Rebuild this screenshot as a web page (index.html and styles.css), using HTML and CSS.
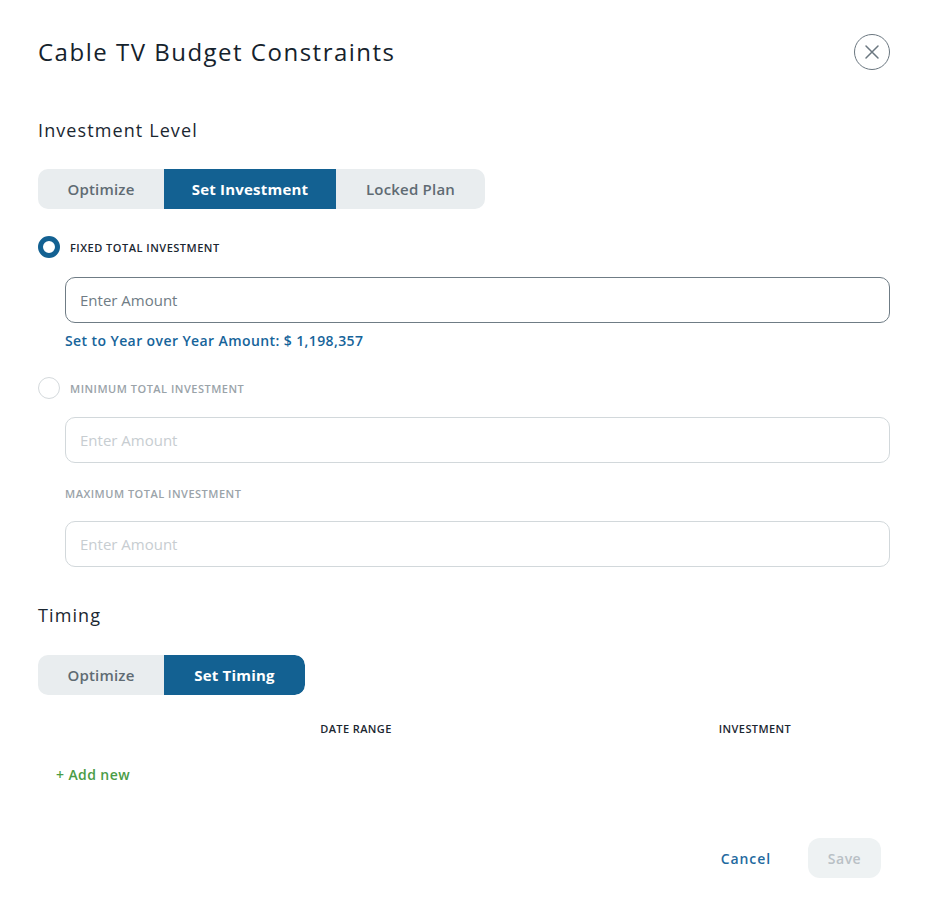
FILE: index.html
```html
<!DOCTYPE html>
<html lang="en">
<head>
<meta charset="utf-8">
<title>Cable TV Budget Constraints</title>
<link rel="stylesheet" href="styles.css">
</head>
<body>
<div class="modal">
  <header class="header">
    <h1 class="title">Cable TV Budget Constraints</h1>
    <button class="close" aria-label="Close">
      <svg width="16" height="16" viewBox="0 0 16 16"><path d="M2 2 L14 14 M14 2 L2 14" stroke="#6b7780" stroke-width="1.5" stroke-linecap="round" fill="none"/></svg>
    </button>
  </header>

  <h2 class="section-title first">Investment Level</h2>
  <div class="seg seg-inv">
    <div class="seg-item w1">Optimize</div>
    <div class="seg-item w2 active">Set Investment</div>
    <div class="seg-item w3 last">Locked Plan</div>
  </div>

  <div class="radio-row r1">
    <span class="radio checked"></span>
    <span class="radio-label">FIXED TOTAL INVESTMENT</span>
  </div>
  <div class="field f1"><span class="placeholder">Enter Amount</span></div>
  <div class="helper">Set to Year over Year Amount: $ 1,198,357</div>

  <div class="radio-row r2">
    <span class="radio"></span>
    <span class="radio-label muted">MINIMUM TOTAL INVESTMENT</span>
  </div>
  <div class="field f2 disabled"><span class="placeholder">Enter Amount</span></div>
  <div class="sub-label">MAXIMUM TOTAL INVESTMENT</div>
  <div class="field f3 disabled"><span class="placeholder">Enter Amount</span></div>

  <h2 class="section-title timing">Timing</h2>
  <div class="seg seg-time">
    <div class="seg-item w1">Optimize</div>
    <div class="seg-item w4 active end">Set Timing</div>
  </div>

  <div class="table-head">
    <div class="th">DATE RANGE</div>
    <div class="th">INVESTMENT</div>
    <div></div>
  </div>
  <div class="add-new">+ Add new</div>

  <footer class="footer">
    <button class="cancel">Cancel</button>
    <button class="save">Save</button>
  </footer>
</div>
</body>
</html>
```

FILE: styles.css
```css
* { box-sizing: border-box; }
html, body { margin: 0; padding: 0; background: #ffffff; }
body {
  font-family: "Open Sans", "Noto Sans", "Liberation Sans", sans-serif;
  color: #1b2731;
}
.modal {
  width: 934px;
  padding: 34px 44px 0 38px;
}
.header {
  display: flex;
  align-items: center;
  justify-content: space-between;
  height: 36px;
}
.title {
  margin: 0;
  font-size: 24px;
  line-height: 32px;
  font-weight: 500;
  color: #15222c;
  letter-spacing: 1.5px;
}
.close {
  width: 36px;
  height: 36px;
  border-radius: 50%;
  border: 1px solid #6b7780;
  background: #fff;
  display: flex;
  align-items: center;
  justify-content: center;
  padding: 0;
}
.section-title {
  margin: 0;
  font-size: 18px;
  line-height: 24px;
  font-weight: 500;
  color: #1b2731;
  letter-spacing: 1.1px;
}
.section-title.first { margin-top: 48px; }
.section-title.timing { margin-top: 36px; }
.seg {
  display: flex;
  height: 40px;
  background: #e9edef;
  border-radius: 10px;
  overflow: hidden;
}
.seg-inv { width: 447px; margin-top: 27px; }
.seg-time { width: 267px; margin-top: 28px; }
.seg-item {
  display: flex;
  align-items: center;
  justify-content: center;
  padding-bottom: 1px;
  font-size: 15px;
  font-weight: 600;
  letter-spacing: 0.2px;
  color: #5f6b73;
}
.seg-item.w1 { width: 126px; }
.seg-item.w2 { width: 172px; }
.seg-item.w3 { width: 149px; }
.seg-item.w4 { width: 141px; }
.seg-item.active { background: #136192; color: #ffffff; font-weight: 700; }
.seg-item.end { border-radius: 0 10px 10px 0; }

.radio-row {
  display: flex;
  align-items: center;
  gap: 10px;
  height: 22px;
}
.radio-row.r1 { margin-top: 27px; }
.radio-row.r2 { margin-top: 26px; }
.radio {
  width: 22px;
  height: 22px;
  border-radius: 50%;
  border: 1px solid #d4d9dc;
  background: #fff;
  flex: none;
}
.radio.checked { border: 5px solid #136192; }
.radio-label {
  font-size: 11px;
  font-weight: 600;
  letter-spacing: 0.5px;
  color: #1b2731;
}
.radio-label.muted { color: #9aa3a9; }

.field {
  margin-left: 27px;
  height: 46px;
  border: 1px solid #6f7c85;
  border-radius: 10px;
  display: flex;
  align-items: center;
  padding-left: 14px;
}
.field.f1 { margin-top: 19px; }
.field.f2 { margin-top: 18px; }
.field.f3 { margin-top: 19px; }
.field.disabled { border-color: #d2d8db; }
.placeholder {
  font-size: 15px;
  color: #6f7c85;
}
.field.disabled .placeholder { color: #c7cdd1; }

.helper {
  margin: 8px 0 0 27px;
  font-size: 14px;
  line-height: 20px;
  font-weight: 600;
  letter-spacing: 0.4px;
  color: #16649a;
}
.sub-label {
  margin: 23px 0 0 27px;
  font-size: 11px;
  line-height: 16px;
  font-weight: 600;
  letter-spacing: 0.5px;
  color: #9aa3a9;
}
.table-head {
  display: grid;
  grid-template-columns: 636px 162px 1fr;
  margin-top: 26px;
  height: 16px;
}
.th {
  text-align: center;
  font-size: 11px;
  line-height: 16px;
  font-weight: 600;
  letter-spacing: 0.4px;
  color: #1b2731;
}
.add-new {
  margin: 28px 0 0 18px;
  font-size: 14px;
  line-height: 20px;
  font-weight: 600;
  letter-spacing: 0.4px;
  color: #4a9c46;
}
.footer {
  display: flex;
  justify-content: flex-end;
  align-items: center;
  gap: 37px;
  margin-top: 53px;
  padding-right: 9px;
}
.cancel {
  border: none;
  background: none;
  padding: 0;
  font-family: inherit;
  font-size: 14px;
  font-weight: 600;
  letter-spacing: 0.9px;
  color: #1f6aa0;
}
.save {
  width: 73px;
  height: 40px;
  border: none;
  border-radius: 12px;
  background: #eef2f3;
  font-family: inherit;
  font-size: 14px;
  font-weight: 600;
  letter-spacing: 0.5px;
  color: #b9c0c5;
}
```
